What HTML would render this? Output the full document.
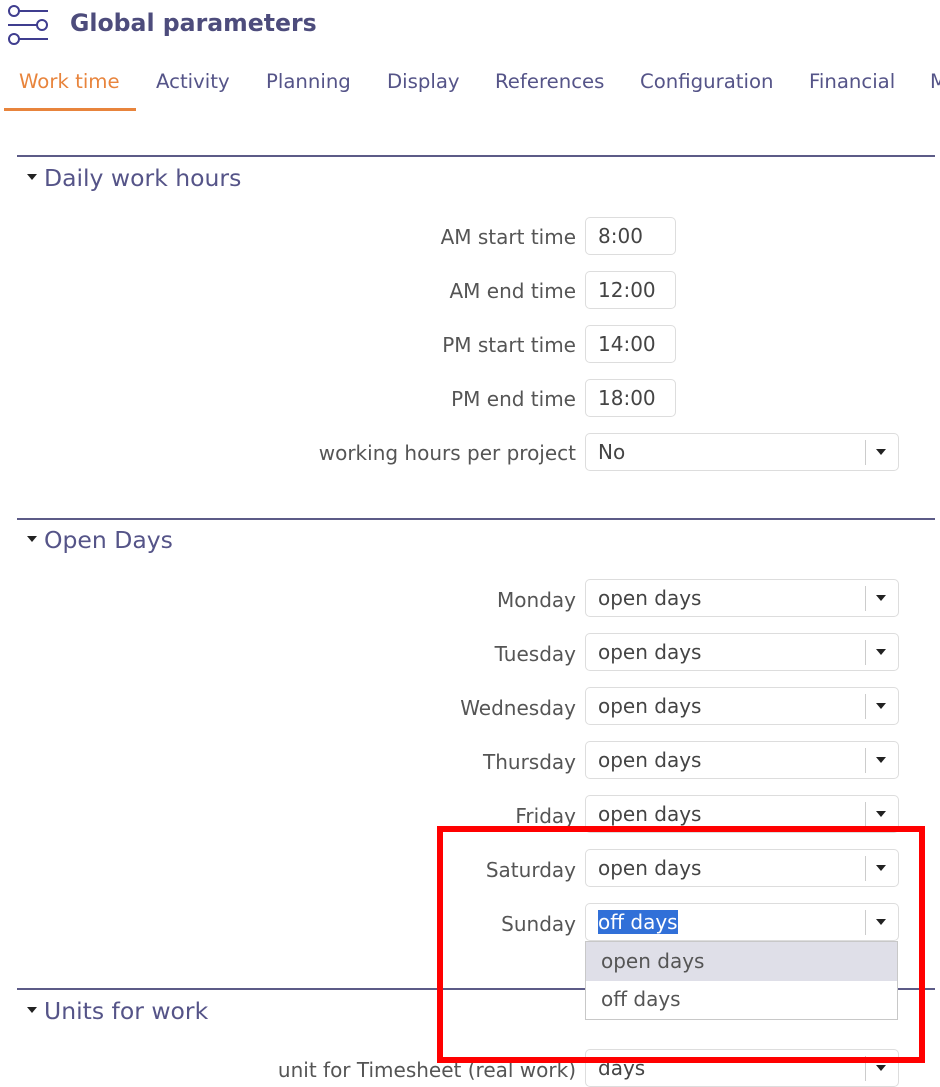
<!DOCTYPE html><html><head><style>
body{margin:0;width:940px;height:1080px;overflow:hidden;background:#fff;font-family:"DejaVu Sans","Liberation Sans",sans-serif;position:relative}
.a{position:absolute}
.t{color:#555488;font-size:19.7px;top:70px}
.hr{position:absolute;left:17px;width:918px;height:2px;background:#5c5b87}
.sh{position:absolute;left:27px;font-size:23.5px;color:#555488}
.sh:before{content:"";display:inline-block;border-left:5px solid transparent;border-right:5px solid transparent;border-top:6px solid #222;vertical-align:middle;margin-right:7px;position:relative;top:-3px}
.l{position:absolute;right:364px;font-size:20px;color:#555;transform:translateY(-50%)}
.in{position:absolute;left:585px;width:91px;height:38px;border:1px solid #ddd;border-radius:5px;box-sizing:border-box;font-size:20px;color:#444;padding:6px 12px;transform:translateY(-50%)}
.s{width:314px}
.s:after{content:"";position:absolute;right:32px;top:6px;height:25px;border-left:1px solid #ccc}
.s i{position:absolute;right:12px;top:15px;border-left:5px solid transparent;border-right:5px solid transparent;border-top:6px solid #222}
</style></head><body>
<svg class="a" style="left:7px;top:4px" width="42" height="42" viewBox="0 0 42 42" fill="none" stroke="#3f3d8f" stroke-width="2"><circle cx="7" cy="7" r="5"/><line x1="12" y1="7" x2="41" y2="7"/><line x1="1" y1="21" x2="30" y2="21"/><circle cx="35" cy="21" r="5"/><circle cx="7" cy="35" r="5"/><line x1="12" y1="35" x2="41" y2="35"/></svg>
<div class="a" style="left:70px;top:9px;font-size:23.6px;font-weight:bold;color:#4d4c7c">Global parameters</div>
<div class="a t" style="left:19px;color:#e8843c">Work time</div>
<div class="a" style="left:4px;top:108px;width:132px;height:3px;background:#e8843c"></div>
<div class="a t" style="left:156px">Activity</div>
<div class="a t" style="left:266px">Planning</div>
<div class="a t" style="left:387px">Display</div>
<div class="a t" style="left:495px">References</div>
<div class="a t" style="left:640px">Configuration</div>
<div class="a t" style="left:809px">Financial</div>
<div class="a t" style="left:930px">M</div>
<div class="hr" style="top:155px"></div><div class="sh" style="top:164px">Daily work hours</div>
<div class="l" style="top:237px">AM start time</div><div class="in" style="top:236px">8:00</div>
<div class="l" style="top:291px">AM end time</div><div class="in" style="top:290px">12:00</div>
<div class="l" style="top:345px">PM start time</div><div class="in" style="top:344px">14:00</div>
<div class="l" style="top:399px">PM end time</div><div class="in" style="top:398px">18:00</div>
<div class="l" style="top:453px">working hours per project</div><div class="in s" style="top:452px">No<i></i></div>
<div class="hr" style="top:518px"></div><div class="sh" style="top:526px">Open Days</div>
<div class="l" style="top:600px">Monday</div><div class="in s" style="top:598px">open days<i></i></div>
<div class="l" style="top:654px">Tuesday</div><div class="in s" style="top:652px">open days<i></i></div>
<div class="l" style="top:708px">Wednesday</div><div class="in s" style="top:706px">open days<i></i></div>
<div class="l" style="top:762px">Thursday</div><div class="in s" style="top:760px">open days<i></i></div>
<div class="l" style="top:816px">Friday</div><div class="in s" style="top:814px">open days<i></i></div>
<div class="l" style="top:870px">Saturday</div><div class="in s" style="top:868px">open days<i></i></div>
<div class="l" style="top:924px">Sunday</div><div class="in s" style="top:922px"><span style="background:#3170d8;color:#fff">off days</span><i></i></div>
<div class="hr" style="top:988px"></div><div class="sh" style="top:997px">Units for work</div>
<div class="l" style="top:1070px">unit for Timesheet (real work)</div><div class="in s" style="top:1068px">days<i></i></div>
<div class="a" style="left:585px;top:941px;width:313px;height:79px;border:1px solid #c8c8c8;box-sizing:border-box;background:#fff;font-size:20px;color:#555">
<div style="background:#dfdfe8;height:39px;padding:7px 15px;box-sizing:border-box">open days</div>
<div style="padding:6px 15px">off days</div></div>
<div class="a" style="left:437px;top:826px;width:488px;height:237px;border:6px solid #f00;box-sizing:border-box"></div>
</body></html>
